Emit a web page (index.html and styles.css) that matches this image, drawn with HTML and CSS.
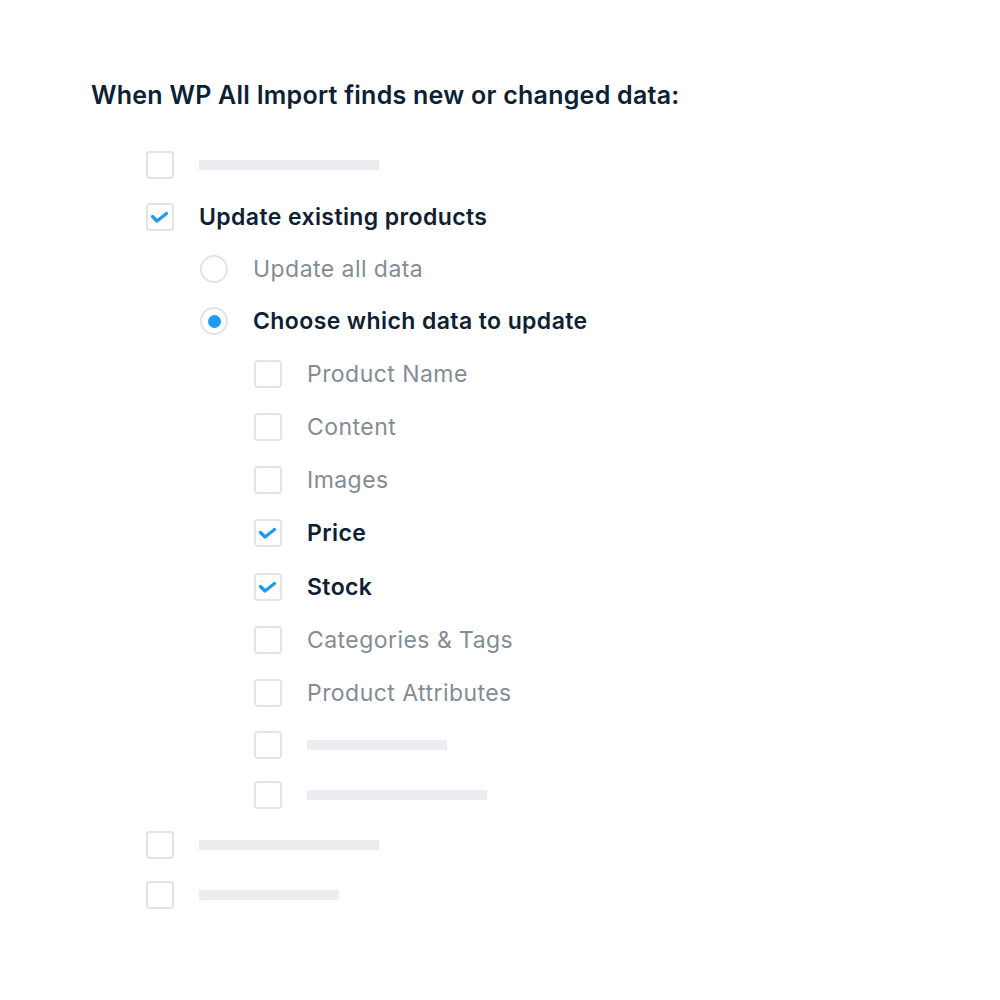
FILE: index.html
```html
<!DOCTYPE html>
<html>
<head>
<meta charset="utf-8">
<link rel="stylesheet" href="styles.css">
</head>
<body>
<div class="page">
  <h1 class="title">When WP All Import finds new or changed data:</h1>
  <ul class="list top">
    <li class="row bar-row"><span class="box"></span><span class="bar w180"></span></li>
    <li class="row"><span class="box"><svg viewBox="0 0 28 28" width="28" height="28"><path d="M6.5 13.5 L11 18 L20.5 10.5" /></svg></span><span class="label strong">Update existing products</span></li>
    <li>
      <ul class="list sub">
        <li class="row radio-row"><span class="radio"></span><span class="label">Update all data</span></li>
        <li class="row radio-row"><span class="radio on"><span class="dot"></span></span><span class="label strong">Choose which data to update</span></li>
        <li>
          <ul class="list sub fields">
            <li class="row"><span class="box"></span><span class="label">Product Name</span></li>
            <li class="row"><span class="box"></span><span class="label">Content</span></li>
            <li class="row"><span class="box"></span><span class="label">Images</span></li>
            <li class="row"><span class="box"><svg viewBox="0 0 28 28" width="28" height="28"><path d="M6.5 13.5 L11 18 L20.5 10.5" /></svg></span><span class="label strong">Price</span></li>
            <li class="row"><span class="box"><svg viewBox="0 0 28 28" width="28" height="28"><path d="M6.5 13.5 L11 18 L20.5 10.5" /></svg></span><span class="label strong">Stock</span></li>
            <li class="row"><span class="box"></span><span class="label">Categories &amp; Tags</span></li>
            <li class="row"><span class="box"></span><span class="label">Product Attributes</span></li>
            <li class="row bar-row"><span class="box"></span><span class="bar w140"></span></li>
            <li class="row bar-row"><span class="box"></span><span class="bar w180"></span></li>
          </ul>
        </li>
      </ul>
    </li>
    <li class="row bar-row"><span class="box"></span><span class="bar w180"></span></li>
    <li class="row bar-row"><span class="box"></span><span class="bar w140"></span></li>
  </ul>
</div>
</body>
</html>
```
FILE: styles.css
```css
html, body {
  margin: 0;
  padding: 0;
  background: #ffffff;
}
.page {
  padding: 80px 0 0 91px;
  font-family: Inter, "Liberation Sans", sans-serif;
}
.title {
  margin: 0 0 30px 0;
  font-size: 25px;
  line-height: 30px;
  font-weight: 600;
  letter-spacing: 0.25px;
  color: #0e2033;
}
.list {
  list-style: none;
  margin: 0;
  padding: 0;
}
.top {
  padding-left: 55px;
}
.sub {
  padding-left: 54px;
}
.row {
  display: flex;
  align-items: center;
  height: 53px;
}
.radio-row {
  height: 52px;
}
.fields .row {
  height: 53.25px;
}
.row.bar-row,
.fields .row.bar-row {
  height: 50px;
}
.box {
  width: 28px;
  height: 28px;
  box-sizing: border-box;
  border: 2px solid #e2e4e7;
  border-radius: 4px;
  flex: none;
  position: relative;
}
.box svg {
  position: absolute;
  left: -2px;
  top: -2px;
}
.box svg path {
  fill: none;
  stroke: #1d9bf0;
  stroke-width: 3.2;
  stroke-linecap: round;
  stroke-linejoin: round;
}
.radio {
  width: 28px;
  height: 28px;
  box-sizing: border-box;
  border: 2px solid #e2e4e7;
  border-radius: 50%;
  flex: none;
  display: flex;
  align-items: center;
  justify-content: center;
}
.dot {
  width: 13px;
  height: 13px;
  border-radius: 50%;
  background: #1d9bf0;
}
.label {
  margin-left: 25px;
  font-size: 23px;
  color: #838c95;
  font-weight: 400;
  letter-spacing: 0.45px;
  line-height: 28px;
}
.label.strong {
  color: #0e2033;
  font-weight: 600;
  letter-spacing: 0.4px;
}
.bar {
  margin-left: 25px;
  height: 10px;
  background: #ebedf0;
}
.w180 { width: 180px; }
.w140 { width: 140px; }
```
